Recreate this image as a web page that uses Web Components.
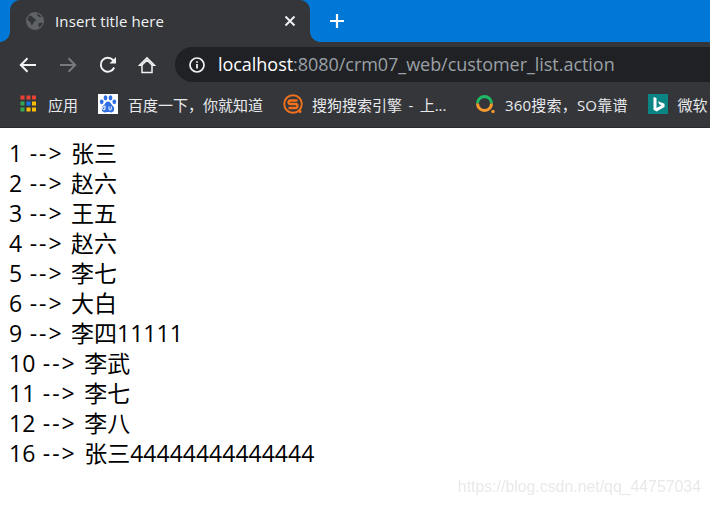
<!DOCTYPE html>
<html><head><meta charset="utf-8">
<style>
html,body{margin:0;padding:0;background:#fff;height:505px;overflow:hidden}
body{display:flex;flex-direction:column;font-family:"Open Sans","Noto Sans CJK SC",sans-serif}
</style></head><body>
<tab-strip title-text="Insert title here"></tab-strip>
<nav-bar></nav-bar>
<bookmark-bar></bookmark-bar>
<customer-list></customer-list>
<water-mark>https://blog.csdn.net/qq_44757034</water-mark>
<script>
function def(name,html,init){customElements.define(name,class extends HTMLElement{constructor(){super();this.attachShadow({mode:'open'}).innerHTML=html;}connectedCallback(){if(init)init(this)}})}
def('tab-strip',`<style>
:host{display:flex;height:42px;background:#0078d7;padding-left:10px;align-items:flex-end;flex:none}
.tab{width:300px;height:42px;background:#35363a;border-radius:10px 10px 0 0;display:flex;align-items:center;position:relative;box-sizing:border-box;padding-left:16px}
.tab::before,.tab::after{content:"";position:absolute;bottom:0;width:10px;height:10px}
.tab::before{left:-10px;background:radial-gradient(circle at 0 0,transparent 9.5px,#35363a 10px)}
.tab::after{right:-10px;background:radial-gradient(circle at 100% 0,transparent 9.5px,#35363a 10px)}
.t{font:500 15px "Open Sans",sans-serif;letter-spacing:.12px;color:#f1f3f4;margin-left:11px;flex:1;white-space:nowrap}
svg{display:block;flex:none}
.x{margin-right:14px}
.plus{margin:0 0 0 19px;align-self:center}
</style>
<div class="tab"><svg width="18" height="18" viewBox="0 0 18 18"><circle cx="9" cy="9" r="9" fill="#5f6368"/><path d="M3 3.500c2 .2 3.500 1 4.500 2.500 .6 1 2.500.5 2.500 2s-2 1-2.500 2.500-1 2.500-2 3c-.3-1.500-.5-2.500-1.500-3.500S2 8.500 1.500 7.500zM11 1.500c2 .5 3.500 2 4.500 3.500-1 .5-2.500 0-3-.5s-1-.5-1.500-3zM13 11c1-.5 2.500-.5 3.500 0-.5 2-2 3.500-3.500 4.500-.5-1.500-1-3 0-4.500z" fill="#35363a"/></svg>
<span class="t"></span>
<svg class="x" width="12" height="12" viewBox="0 0 12 12"><path d="M1.500 1.500l9 9M10.500 1.500l-9 9" stroke="#f1f3f4" stroke-width="1.900" fill="none"/></svg></div>
<svg class="plus" width="16" height="16" viewBox="0 0 16 16"><path d="M8 1v14M1 8h14" stroke="#fff" stroke-width="2.200"/></svg>`,el=>{el.shadowRoot.querySelector('.t').textContent=el.getAttribute('title-text')});
def('nav-bar',`<style>
:host{display:flex;height:41px;background:#35363a;align-items:center;flex:none;padding:4px 0 0 8px;box-sizing:border-box}
.ic{width:40px;display:flex;justify-content:center;flex:none}
svg{display:block;flex:none}
.omni{flex:1;height:35px;background:#202124;border-radius:17.500px 0 0 17.500px;margin-left:7px;display:flex;align-items:center;padding-left:14px;font:18px "Open Sans",sans-serif;color:#9aa0a6;white-space:nowrap;overflow:hidden}
b{font-weight:400;color:#fff}
.u{margin-left:13px;letter-spacing:-.04px;padding-bottom:2px}
</style>
<div class="ic"><svg width="18" height="16" viewBox="0 0 18 16"><path d="M17 8H2M8.500 1.200L1.800 8l6.700 6.800" stroke="#f1f3f4" stroke-width="2" fill="none"/></svg></div>
<div class="ic"><svg width="18" height="16" viewBox="0 0 18 16"><path d="M1 8h15M9.500 1.200L16.200 8l-6.700 6.800" stroke="#77797c" stroke-width="2" fill="none"/></svg></div>
<div class="ic"><svg width="18" height="18" viewBox="0 0 18 18"><path d="M15.200 11.500A7 7 0 1 1 14 4l1 1" stroke="#f1f3f4" stroke-width="1.900" fill="none"/><path d="M17 1v6.500h-6.500z" fill="#f1f3f4"/></svg></div>
<div class="ic" style="width:38px;margin-right:2px"><svg width="18" height="18" viewBox="0 0 18 18"><path d="M9 1.800L1.500 9.200H4V16.500h10V9.200h2.500zM4 9l5-5 5 5" stroke="#f1f3f4" stroke-width="1.500" fill="none"/></svg></div>
<div class="omni"><svg width="16" height="16" viewBox="0 0 16 16"><circle cx="8" cy="8" r="7" stroke="#f1f3f4" stroke-width="1.700" fill="none"/><path d="M8 7v4.500M8 4.200v1.600" stroke="#f1f3f4" stroke-width="1.800"/></svg><span class="u"><b>localhost</b>:8080/crm07_web/customer_list.action</span></div>`);
def('book-mark',`<style>
:host{display:inline-flex;align-items:center;flex:none;color:#e8eaed;font:15px "Open Sans","Noto Sans CJK SC",sans-serif;white-space:nowrap}
.i{width:20px;height:20px;display:flex;align-items:center;justify-content:center;flex:none;margin-right:var(--g,10px)}
</style><span class="i"><slot name="i"></slot></span><slot></slot>`);
def('bookmark-bar',`<style>
:host{display:flex;height:45px;background:#35363a;align-items:center;flex:none;padding:0 0 2px 18px;box-sizing:border-box;border-bottom:1px solid #2a2b2e;overflow:hidden}
svg{display:block}
</style>
<book-mark style="--g:10px;margin-right:20px"><svg slot="i" width="18" height="18" viewBox="0 0 18 18"><rect x="1.500" y="0.500" width="4" height="4" fill="#ea4335"/><rect x="7.500" y="0.500" width="4" height="4" fill="#ea4335"/><rect x="13" y="0.500" width="4" height="4" fill="#ea4335"/><rect x="1.500" y="6.500" width="4" height="4" fill="#34a853"/><rect x="7.500" y="6.500" width="4" height="4" fill="#1a73e8"/><rect x="13" y="6.500" width="4" height="4" fill="#fbbc05"/><rect x="1.500" y="12.500" width="4" height="4" fill="#34a853"/><rect x="7.500" y="12.500" width="4" height="4" fill="#fbbc05"/><rect x="13" y="12.500" width="4" height="4" fill="#fbbc05"/></svg>应用</book-mark>
<book-mark style="--g:10px;margin-right:20px"><svg slot="i" width="20" height="20" viewBox="0 0 20 20"><rect width="20" height="20" fill="#fff"/><g fill="#2f6fe4"><ellipse cx="3.700" cy="7.800" rx="1.900" ry="2.400"/><ellipse cx="7.500" cy="3.800" rx="1.900" ry="2.600"/><ellipse cx="12.500" cy="3.800" rx="1.900" ry="2.600"/><ellipse cx="16.300" cy="7.800" rx="1.900" ry="2.400"/><path d="M10 7.500c-2.500 0-3 3-5 4.500S3.500 18.500 7 18.500c1.500 0 2-.4 3-.4s1.500.4 3 .4c3.500 0 4-4.500 2-6.500s-2.500-4.500-5-4.500z"/></g><path d="M7 11.500v4M7 13.200a1.500 1.500 0 1 0 0 2.200M11 12.500v2.500c0 1.500 2.300 1.500 2.300 0v-2.500" stroke="#fff" stroke-width="1" fill="none"/></svg>百度一下，你就知道</book-mark>
<book-mark style="--g:9px;margin-right:28.500px;word-spacing:2.500px"><svg slot="i" width="20" height="20" viewBox="0 0 20 20"><circle cx="10" cy="10" r="8.800" fill="none" stroke="#f2711c" stroke-width="1.900"/><path d="M14.500 6.500H7.500q-2 0-2 1.800T7.500 10h5q2 0 2 1.900T12.500 14H5.500" fill="none" stroke="#f2711c" stroke-width="2.300"/><circle cx="17" cy="17.500" r="1.500" fill="#f2711c"/></svg>搜狗搜索引擎 - 上...</book-mark>
<book-mark style="--g:10px;margin-right:20px;letter-spacing:.2px"><svg slot="i" width="20" height="20" viewBox="0 0 20 20"><path d="M2.500 9.500a7 7 0 0 1 14 0" fill="none" stroke="#1fb866" stroke-width="3"/><path d="M2.500 9.500a7 7 0 0 0 14 0" fill="none" stroke="#f79a2e" stroke-width="3"/><circle cx="18" cy="17.500" r="1.700" fill="#f79a2e"/></svg>360搜索，SO靠谱</book-mark>
<book-mark style="--g:10px"><svg slot="i" width="20" height="20" viewBox="0 0 20 20"><rect width="20" height="20" fill="#0b8484"/><path d="M5.500 3l3 1v10l5-2.700-2.300-1-1.200-3 6.500 2.500v3.300L8.500 17.500l-3-1.700z" fill="#fff"/></svg>微软</book-mark>`);
const rows=[['1','张三'],['2','赵六'],['3','王五'],['4','赵六'],['5','李七'],['6','大白'],['9','李四11111'],['10','李武'],['11','李七'],['12','李八'],['16','张三44444444444444']];
def('customer-list',`<style>
:host{display:block;flex:1;background:#fff;color:#000;padding:10px 0 0 9px;font:23px/30px "Open Sans","Noto Sans CJK SC",sans-serif;white-space:pre;word-spacing:1.500px}
div{height:30px}
span{letter-spacing:2px}
</style>`+rows.map(r=>`<div>${r[0]} <span>--&gt;</span> ${r[1]}</div>`).join(''));
def('water-mark',`<style>
:host{position:fixed;right:9px;top:478px;font:15.850px/18px "Liberation Sans",sans-serif;color:#e9e9e9;white-space:nowrap}
</style><slot></slot>`);
</script>
</body></html>
